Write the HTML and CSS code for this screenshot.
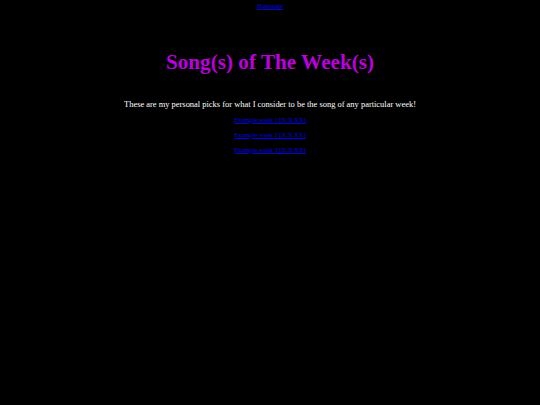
FILE: index.html
```html
<!DOCTYPE html>
<html>
<head>
<meta charset="utf-8">
<link rel="stylesheet" href="styles.css">
</head>
<body>
<div class="page">
  <nav class="top"><a href="#">Homepage</a></nav>
  <h1 class="title">Song(s) of The Week(s)</h1>
  <p class="intro">These are my personal picks for what I consider to be the song of any particular week!</p>
  <ul class="weeks">
    <li><a href="#">Example week 1 [X.X.XX]</a></li>
    <li><a href="#">Example week 2 [X.X.XX]</a></li>
    <li><a href="#">Example week 3 [X.X.XX]</a></li>
  </ul>
</div>
</body>
</html>
```
FILE: styles.css
```css
html, body {
  margin: 0;
  padding: 0;
  background: #000;
}
body {
  font-family: "Liberation Serif", "Times New Roman", serif;
  color: #fff;
  width: 540px;
  height: 405px;
}
.page {
  display: flex;
  flex-direction: column;
  align-items: center;
  text-align: center;
}
a {
  color: #0000ee;
}
.top {
  font-size: 6px;
  margin-top: 3px;
}
.title {
  font-size: 21.2px;
  font-weight: bold;
  color: #bb00dd;
  margin: 33px 0 0 0;
  line-height: 40px;
}
.intro {
  font-size: 8.45px;
  margin: 16px 0 0 0;
  line-height: 12px;
}
.weeks {
  list-style: none;
  margin: 5.5px 0 0 0;
  padding: 0;
  font-size: 6.5px;
  display: flex;
  flex-direction: column;
  gap: 7px;
}
.weeks li {
  line-height: 8px;
}
```
